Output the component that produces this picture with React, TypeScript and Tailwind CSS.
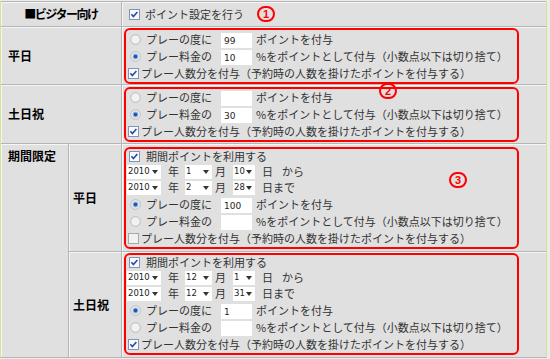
import React from 'react';

// XP-ish form controls drawn small, like the old admin screen
function Check({ on = true }: { on?: boolean }) {
  return (
    <svg width="11" height="11" viewBox="0 0 11 11" className="shrink-0">
      <rect x="0.5" y="0.5" width="10" height="10" fill={on ? '#fbfbfb' : '#f1f1f1'} stroke={on ? '#7f94b8' : '#a8a8a8'} />
      {on && <path d="M2.4 5.2 L4.4 7.5 L8.4 2.9" fill="none" stroke="#2846b4" strokeWidth="1.6" />}
    </svg>
  );
}

function Radio({ on = false }: { on?: boolean }) {
  return (
    <svg width="11" height="11" viewBox="0 0 11 11" className="shrink-0">
      <circle cx="5.5" cy="5.5" r="4.8" fill="#f2f2f2" stroke="#b8b8b8" />
      {on && (
        <>
          <circle cx="5.5" cy="5.5" r="2.9" fill="#8db2e2" />
          <circle cx="5.5" cy="5.5" r="1.8" fill="#1c52b6" />
        </>
      )}
    </svg>
  );
}

function Field({ value = '' }: { value?: string }) {
  return (
    <input
      readOnly
      value={value}
      className="w-[31px] h-[15px] bg-white pl-[3px] text-[9px] font-['DejaVu_Sans',sans-serif] text-[#222] outline-none"
    />
  );
}

function Pick({ value, className }: { value: string; className: string }) {
  return (
    <span
      className={`inline-flex items-center h-[14px] bg-white pl-[1px] pr-[3px] text-[8.5px] font-['DejaVu_Sans',sans-serif] text-[#222] ${className}`}
    >
      {value}
      <svg width="6" height="4" viewBox="0 0 6 4" className="ml-auto">
        <path d="M0 0 H6 L3 4 Z" fill="#333" />
      </svg>
    </span>
  );
}

function Badge({ n, className = '' }: { n: string; className?: string }) {
  return (
    <span
      className={`flex items-center justify-center w-[18px] h-[16px] rounded-full border-2 border-[#ff0000] text-[#ff0000] text-[11px] font-bold leading-none font-['Liberation_Sans',sans-serif] ${className}`}
    >
      {n}
    </span>
  );
}

function PointLines({ per, rate, perOn, people }: { per: string; rate: string; perOn: boolean; people: boolean }) {
  return (
    <>
      <div className="flex items-center h-[17px]">
        <span className="ml-[3px] mr-[5px]"><Radio on={perOn} /></span>
        プレーの度に
        <span className="ml-[9px]"><Field value={per} /></span>
        <span className="ml-[4px]">ポイントを付与</span>
      </div>
      <div className="flex items-center h-[17px]">
        <span className="ml-[3px] mr-[5px]"><Radio on={!perOn} /></span>
        プレー料金の
        <span className="ml-[9px]"><Field value={rate} /></span>
        <span className="ml-[4px]">%をポイントとして付与（小数点以下は切り捨て）</span>
      </div>
      <div className="flex items-center h-[17px]">
        <span className="ml-[1px] mr-[2px]"><Check on={people} /></span>
        プレー人数分を付与（予約時の人数を掛けたポイントを付与する）
      </div>
    </>
  );
}

function PeriodBox(p: {
  from: [string, string, string];
  to: [string, string, string];
  per: string;
  rate: string;
  people: boolean;
}) {
  const dateRow = (d: [string, string, string], tail: React.ReactNode) => (
    <div className="flex items-center h-[17px]">
      <Pick value={d[0]} className="w-[34px]" />
      <span className="ml-[7px]">年</span>
      <Pick value={d[1]} className="ml-[6px] w-[27px]" />
      <span className="ml-[3px]">月</span>
      <Pick value={d[2]} className="ml-[7px] w-[22px]" />
      <span className="ml-[7px]">日</span>
      {tail}
    </div>
  );
  return (
    <div className="w-[395px] border-2 border-[#ff0000] rounded-[6px] pl-[1px]">
      <div className="flex items-center h-[14px]">
        <span className="ml-[2px] mr-[6px]"><Check /></span>
        期間ポイントを利用する
      </div>
      {dateRow(p.from, <span className="ml-[9px]">から</span>)}
      <div className="-mt-[1px]">{dateRow(p.to, <span>まで</span>)}</div>
      <PointLines per={p.per} rate={p.rate} perOn people={p.people} />
    </div>
  );
}

const cell = 'shadow-[inset_1px_1px_0_#f5f5f5]';

export default function App() {
  return (
    <div className="relative w-[550px] h-[359px] overflow-hidden bg-[#ebebeb] pt-[1px] font-['Noto_Sans_CJK_JP','Noto_Sans',sans-serif] text-[11px] text-[#333]">
      <div className="w-[547px] border-x border-b border-x-[#d3e68f] border-b-[#b5b5b5] bg-[#e0e0e0]">
        {/* ビジター向け */}
        <div className="flex h-[25px] border-t border-[#b5b5b5]">
          <div className={`w-[120px] flex items-center justify-center font-bold text-[12px] tracking-[-1.5px] text-black ${cell}`}>
            ■ビジター向け
          </div>
          <div className={`flex-1 flex items-center pl-[7px] border-l border-[#b5b5b5] ${cell}`}>
            <Check />
            <span className="ml-[5px]">ポイント設定を行う</span>
            <Badge n="1" className="ml-[13px]" />
          </div>
        </div>

        {/* 平日 */}
        <div className="flex h-[58px] border-t border-[#b5b5b5]">
          <div className={`w-[120px] flex items-center pl-[7px] font-bold text-[12px] text-black ${cell}`}>平日</div>
          <div className={`flex-1 border-l border-[#b5b5b5] pl-[2px] pt-[1px] ${cell}`}>
            <div className="w-[395px] border-2 border-[#ff0000] rounded-[6px] pt-[1px] pl-[1px]">
              <PointLines per="99" rate="10" perOn={false} people />
            </div>
          </div>
        </div>

        {/* 土日祝 */}
        <div className="flex h-[59px] border-t border-[#b5b5b5]">
          <div className={`w-[120px] flex items-center pl-[7px] font-bold text-[12px] text-black ${cell}`}>土日祝</div>
          <div className={`flex-1 border-l border-[#b5b5b5] pl-[2px] pt-[2px] ${cell}`}>
            <div className="w-[395px] border-2 border-[#ff0000] rounded-[6px] pl-[1px]">
              <PointLines per="" rate="30" perOn={false} people />
            </div>
          </div>
        </div>

        {/* 期間限定 */}
        <div className="flex border-t border-[#b5b5b5]">
          <div className={`w-[67px] pl-[7px] pt-[3px] leading-[17px] font-bold text-[12px] text-black ${cell}`}>期間限定</div>
          <div className="flex-1 flex flex-col">
            <div className="flex h-[107px]">
              <div className={`w-[53px] flex items-center pl-[4px] border-l border-[#b5b5b5] font-bold text-[12px] text-black ${cell}`}>平日</div>
              <div className={`flex-1 border-l border-[#b5b5b5] pl-[2px] pt-[3px] ${cell}`}>
                <PeriodBox from={['2010', '1', '10']} to={['2010', '2', '28']} per="100" rate="" people={false} />
              </div>
            </div>
            <div className="flex h-[106px] border-t border-[#b5b5b5]">
              <div className={`w-[53px] flex items-center pl-[4px] border-l border-[#b5b5b5] font-bold text-[12px] text-black ${cell}`}>土日祝</div>
              <div className={`flex-1 border-l border-[#b5b5b5] pl-[2px] pt-[1px] ${cell}`}>
                <PeriodBox from={['2010', '12', '1']} to={['2010', '12', '31']} per="1" rate="" people />
              </div>
            </div>
          </div>
        </div>
      </div>

      {/* annotation marks over the grid */}
      <Badge n="2" className="absolute left-[379px] top-[83px]" />
      <Badge n="3" className="absolute left-[449px] top-[172px]" />
    </div>
  );
}
